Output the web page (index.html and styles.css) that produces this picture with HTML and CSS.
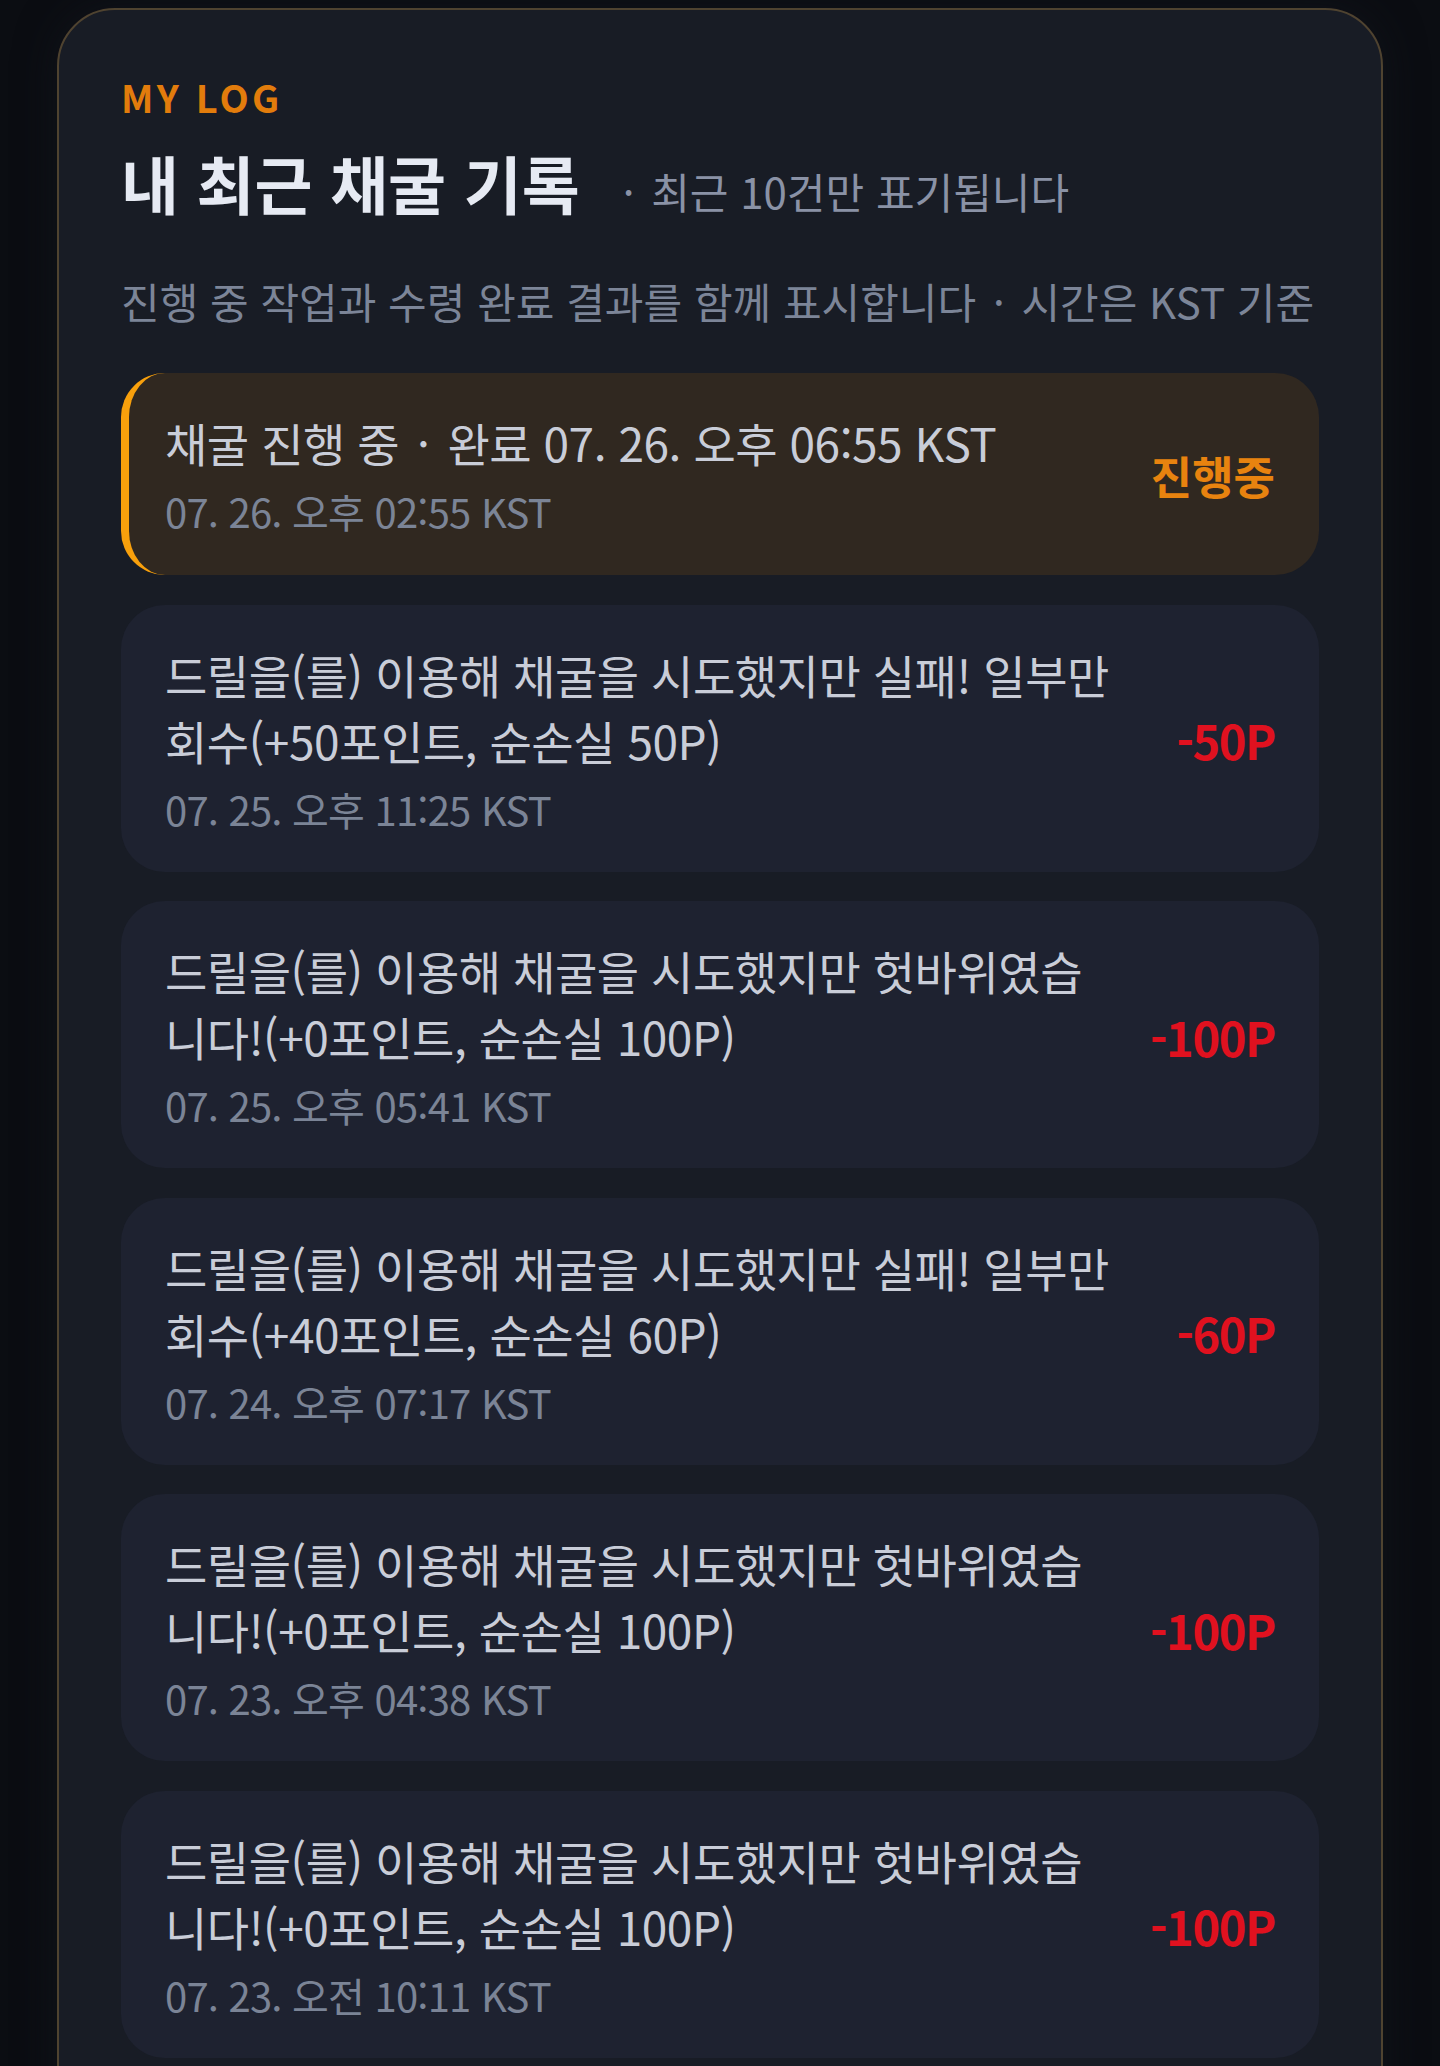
FILE: index.html
```html
<!DOCTYPE html>
<html lang="ko">
<head>
<meta charset="utf-8">
<title>MY LOG</title>
<link rel="stylesheet" href="styles.css">
</head>
<body>
<main class="page">
  <section class="log-card">
    <p class="eyebrow">MY LOG</p>
    <div class="title-row">
      <h2 class="title">내 최근 채굴 기록</h2>
      <span class="title-note"><span class="sep">·</span> 최근 10건만 표기됩니다</span>
    </div>
    <p class="desc">진행 중 작업과 수령 완료 결과를 함께 표시합니다 <span class="sep">·</span> 시간은 KST 기준</p>
    <ul class="log-list">
      <li class="log-item is-active">
        <div class="log-body">
          <p class="log-text">채굴 진행 중 <span class="sep">·</span> 완료 07. 26. 오후 06:55 KST</p>
          <p class="log-time">07. 26. 오후 02:55 KST</p>
        </div>
        <span class="log-status">진행중</span>
      </li>
      <li class="log-item">
        <div class="log-body">
          <p class="log-text">드릴을(를) 이용해 채굴을 시도했지만 실패! 일부만 회수(+50포인트, 순손실 50P)</p>
          <p class="log-time">07. 25. 오후 11:25 KST</p>
        </div>
        <span class="log-amount">-50P</span>
      </li>
      <li class="log-item">
        <div class="log-body">
          <p class="log-text">드릴을(를) 이용해 채굴을 시도했지만 헛바위였습니다!(+0포인트, 순손실 100P)</p>
          <p class="log-time">07. 25. 오후 05:41 KST</p>
        </div>
        <span class="log-amount">-100P</span>
      </li>
      <li class="log-item">
        <div class="log-body">
          <p class="log-text">드릴을(를) 이용해 채굴을 시도했지만 실패! 일부만 회수(+40포인트, 순손실 60P)</p>
          <p class="log-time">07. 24. 오후 07:17 KST</p>
        </div>
        <span class="log-amount">-60P</span>
      </li>
      <li class="log-item">
        <div class="log-body">
          <p class="log-text">드릴을(를) 이용해 채굴을 시도했지만 헛바위였습니다!(+0포인트, 순손실 100P)</p>
          <p class="log-time">07. 23. 오후 04:38 KST</p>
        </div>
        <span class="log-amount">-100P</span>
      </li>
      <li class="log-item">
        <div class="log-body">
          <p class="log-text">드릴을(를) 이용해 채굴을 시도했지만 헛바위였습니다!(+0포인트, 순손실 100P)</p>
          <p class="log-time">07. 23. 오전 10:11 KST</p>
        </div>
        <span class="log-amount">-100P</span>
      </li>
    </ul>
  </section>
</main>
</body>
</html>
```

FILE: styles.css
```css
html, body {
  margin: 0;
  padding: 0;
}

body {
  height: 2066px;
  overflow: hidden;
  background: #0b0d12;
  font-family: "Noto Sans CJK KR", "Noto Sans", sans-serif;
  color: #e6eaf3;
}

.page {
  padding: 8px 57px 0;
}

.log-card {
  background: #181c25;
  border: 2px solid #4f4330;
  border-radius: 58px;
  padding: 64px 62px 120px;
  box-shadow: 0 0 40px rgba(20, 24, 32, 0.6);
}

.eyebrow {
  margin: 0;
  font-size: 38px;
  line-height: 46px;
  font-weight: 700;
  letter-spacing: 0.085em;
  color: #e27c0c;
}

.title-row {
  display: flex;
  align-items: baseline;
  gap: 38px;
  margin-top: 22px;
}

.title {
  margin: 0;
  font-size: 63px;
  line-height: 80px;
  font-weight: 700;
  color: #e6eaf3;
}

.title-note {
  font-size: 42px;
  color: #8a92a6;
}

.sep {
  margin: 0 0.12em;
}

.desc {
  margin: 49px 0 0;
  font-size: 42px;
  line-height: 60px;
  color: #7c8598;
}

.log-list {
  list-style: none;
  margin: 42px 0 0;
  padding: 0;
  display: flex;
  flex-direction: column;
  gap: 29.5px;
}

.log-item {
  display: grid;
  grid-template-columns: minmax(0, 1fr) auto;
  align-items: center;
  column-gap: 34px;
  padding: 36px 44px 33px;
  background: #1e2230;
  border-radius: 44px;
}

.log-item.is-active {
  background: #302820;
  border-left: 8px solid #f8a00c;
  padding-left: 36px;
  padding-bottom: 34px;
}

.log-text {
  margin: 0;
  font-size: 46px;
  line-height: 66px;
  letter-spacing: -0.01em;
  color: #c9cdd8;
}

.log-time {
  margin: 6px 0 0;
  font-size: 40px;
  line-height: 60px;
  letter-spacing: -0.02em;
  color: #7b8496;
}

.log-status,
.log-amount {
  min-width: 120px;
  text-align: right;
  font-weight: 700;
}

.log-status {
  font-size: 45px;
  color: #e8830f;
}

.log-amount {
  font-size: 47px;
  letter-spacing: -0.03em;
  color: #e0111f;
}
```
